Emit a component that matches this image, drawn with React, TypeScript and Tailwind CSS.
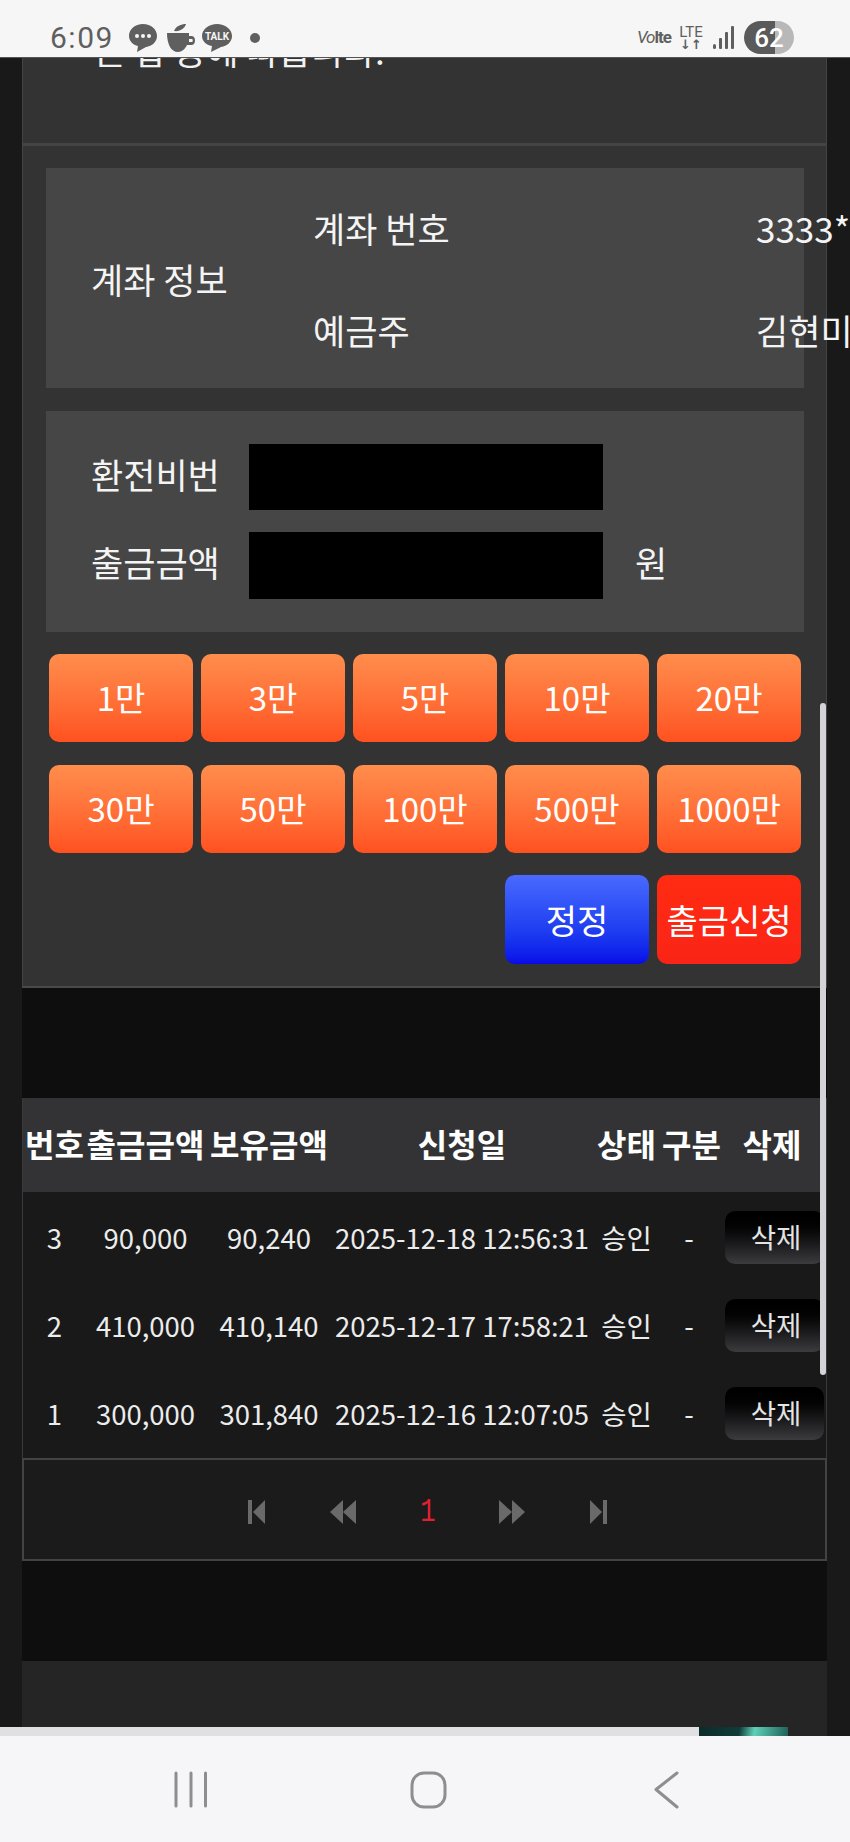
const amounts = ["1만", "3만", "5만", "10만", "20만", "30만", "50만", "100만", "500만", "1000만"];

const headers = ["번호", "출금금액", "보유금액", "신청일", "상태", "구분", "삭제"];

const rows = [
  { no: 3, amount: "90,000", balance: "90,240", date: "2025-12-18 12:56:31" },
  { no: 2, amount: "410,000", balance: "410,140", date: "2025-12-17 17:58:21" },
  { no: 1, amount: "300,000", balance: "301,840", date: "2025-12-16 12:07:05" },
];

const columns = "grid grid-cols-[63px_119px_128px_258px_71px_54px_112px]";

function StatusBar() {
  return (
    <div className="h-[58px] bg-[#f6f6f6] flex items-center pl-[50px] text-[#5f5f5f] font-['Roboto',sans-serif] pt-[18px] border-b border-[#555]">
      <span className="text-[30px] w-[79px] leading-none tracking-[1.5px]">6:09</span>
      <svg width="28" height="28" viewBox="0 0 28 28" className="mr-[10px]" fill="#5f5f5f">
        <path d="M14 0C22 0 28 5 28 12C28 18 23 22 17 23L8 28L9 22C4 21 0 17 0 12C0 5 6 0 14 0Z" />
        <circle cx="8" cy="12" r="2" fill="#f6f6f6" />
        <circle cx="14" cy="12" r="2" fill="#f6f6f6" />
        <circle cx="20" cy="12" r="2" fill="#f6f6f6" />
      </svg>
      <svg width="29" height="28" viewBox="0 0 29 28" className="mr-[6px]" fill="#5f5f5f">
        <path d="M7 7C9 2 14 0 19 0C18 4 13 8 7 7Z" />
        <path d="M0 9H22V12H25C29 12 29 21 25 21H20C18 25 15 28 11 28C4 28 0 20 0 9ZM22 15V18H25C26 18 26 15 25 15Z" fillRule="evenodd" />
      </svg>
      <svg width="30" height="28" viewBox="0 0 30 28" fill="#5f5f5f">
        <path d="M15 0C23 0 30 5 30 12C30 18 25 22 19 23L9 28L10 22C4 21 0 17 0 12C0 5 7 0 15 0Z" />
        <text x="15" y="16" textAnchor="middle" fontSize="10" fontWeight="700" fill="#f6f6f6" fontFamily="Roboto, sans-serif">TALK</text>
      </svg>
      <span className="ml-[18px] w-[10px] h-[10px] rounded-full bg-[#5f5f5f]" />
      <div className="ml-auto mr-[56px] flex items-center">
        <span className="text-[17px] leading-none w-[41px] tracking-[-1px] whitespace-nowrap">
          <span className="italic">Vo</span>
          <span className="font-bold">lte</span>
        </span>
        <div className="flex flex-col items-center w-[26px] mr-[9px]">
          <span className="text-[15px] leading-[14px]">LTE</span>
          <span className="text-[13px] leading-[12px] font-bold font-['DejaVu_Sans',sans-serif]">↓↑</span>
        </div>
        <svg width="22" height="23" viewBox="0 0 22 23" className="mr-[9px]" fill="#5f5f5f">
          <rect x="0" y="18" width="3" height="5" rx="1.5" />
          <rect x="6" y="12" width="3" height="11" rx="1" />
          <rect x="12" y="6" width="3" height="17" rx="1" />
          <rect x="18" y="0" width="3" height="23" rx="1" />
        </svg>
        <div className="w-[50px] h-[33px] rounded-full overflow-hidden bg-[linear-gradient(90deg,#5a5a5a_62%,#b8b8b8_62%)] flex items-center justify-center text-white text-[26px] font-medium leading-none">
          62
        </div>
      </div>
    </div>
  );
}

function PagerIcon({ dir, end }: { dir: "left" | "right"; end: boolean }) {
  // same shape for both directions, right just gets flipped
  return (
    <svg width={end ? 17 : 26} height="24" viewBox={end ? "0 0 17 24" : "0 0 26 24"} fill="#6a6a6a" className={dir === "right" ? "-scale-x-100" : ""}>
      {end ? (
        <>
          <rect x="0" y="0" width="4" height="24" />
          <path d="M17 0V24L5 12Z" />
        </>
      ) : (
        <>
          <path d="M13 0V24L0 12Z" />
          <path d="M26 0V24L13 12Z" />
        </>
      )}
    </svg>
  );
}

function App() {
  return (
    <div className="w-[850px] h-[1842px] overflow-hidden flex flex-col bg-[#191919] font-['Noto_Sans_CJK_KR','Noto_Sans',sans-serif] text-[#f2f2f2]">
      <StatusBar />
      <main className="relative flex-1 overflow-hidden flex flex-col">
        <div className="ml-[22px] w-[805px] flex-1 flex flex-col">
          {/* notice, scrolled mostly out of view */}
          <div className="h-[85px] bg-[#333333] border-x border-[#444] overflow-hidden shrink-0">
            <p className="-mt-[30px] pl-[71px] text-[35px] leading-[44px] whitespace-nowrap">는 합 등에 따릅니다.</p>
          </div>

          {/* withdraw form */}
          <section className="h-[845px] shrink-0 bg-[#333333] border-x border-[#444] border-t-[3px] border-t-[#444] border-b-2 border-b-[#4a4a4a] pt-[22px] text-[35px] text-[#f4f4f4]">
            <div className="mx-[23px] w-[758px] h-[220px] bg-[#464646] flex items-center pl-[45px]">
              <span className="w-[222px] shrink-0 leading-none">계좌 정보</span>
              <div className="flex flex-col gap-[60px] pt-[2px]">
                <div className="flex whitespace-nowrap leading-[42px]">
                  <span className="w-[443px] shrink-0">계좌 번호</span>
                  <span>3333***********</span>
                </div>
                <div className="flex whitespace-nowrap leading-[42px]">
                  <span className="w-[443px] shrink-0">예금주</span>
                  <span>김현미</span>
                </div>
              </div>
            </div>

            <div className="mx-[23px] mt-[23px] w-[758px] h-[221px] bg-[#464646] pl-[45px] pt-[33px] flex flex-col gap-[22px]">
              <div className="flex items-center h-[66px]">
                <span className="w-[158px] leading-none pb-[8px]">환전비번</span>
                <div className="w-[354px] h-[66px] bg-black" />
              </div>
              <div className="flex items-center h-[67px]">
                <span className="w-[158px] leading-none pb-[8px]">출금금액</span>
                <div className="w-[354px] h-[67px] bg-black" />
                <span className="ml-[32px] leading-none pb-[8px]">원</span>
              </div>
            </div>

            <div className="mx-[26px] mt-[22px] w-[752px] grid grid-cols-5 gap-x-[8px] gap-y-[23px] text-[33px] text-white">
              {amounts.map((a) => (
                <button key={a} className="h-[88px] rounded-[10px] bg-gradient-to-b from-[#ff8d4c] to-[#ff5120]">
                  {a}
                </button>
              ))}
            </div>
            <div className="mx-[26px] mt-[22px] w-[752px] flex justify-end gap-[8px] text-[34px] text-white">
              <button className="w-[144px] h-[89px] rounded-[10px] bg-gradient-to-b from-[#4a69ff] to-[#0a08e8]">정정</button>
              <button className="w-[144px] h-[89px] rounded-[10px] bg-gradient-to-b from-[#ff2c12] to-[#fa2416]">출금신청</button>
            </div>
          </section>

          {/* history */}
          <div className="h-[110px] shrink-0 bg-[#0e0e0f]" />
          <div className="shrink-0 border-x border-[#3a3a3a]">
            <div className={`${columns} h-[94px] bg-[#333335] items-center text-center text-[32px] font-bold text-white whitespace-nowrap`}>
              {headers.map((h) => (
                <span key={h} className="pb-[4px]">{h}</span>
              ))}
            </div>
            <div className="bg-[#19191a] pt-[2px] text-[27.500px] text-[#ececec]">
              {rows.map((r) => (
                <div key={r.no} className={`${columns} h-[88px] items-center text-center whitespace-nowrap`}>
                  <span>{r.no}</span>
                  <span>{r.amount}</span>
                  <span>{r.balance}</span>
                  <span>{r.date}</span>
                  <span>승인</span>
                  <span>-</span>
                  <span className="pl-[9px] pb-[2px] flex">
                    <button className="w-[99px] h-[53px] rounded-[10px] bg-gradient-to-b from-[#000000] to-[#3c3c3f] text-[#e4e4e4] pl-[3px]">삭제</button>
                  </span>
                </div>
              ))}
            </div>
          </div>

          {/* pager */}
          <div className="h-[103px] shrink-0 bg-[#1b1b1c] border-2 border-[#434343] pt-[4px] flex items-center">
            <div className="ml-[224px] flex items-center">
              <PagerIcon dir="left" end />
              <span className="ml-[65px]"><PagerIcon dir="left" end={false} /></span>
              <span className="ml-[65px] w-[14px] flex justify-center text-[#e3202f] text-[34px] leading-none scale-x-75 font-['Liberation_Mono',monospace]">1</span>
              <span className="ml-[64px]"><PagerIcon dir="right" end={false} /></span>
              <span className="ml-[65px]"><PagerIcon dir="right" end /></span>
            </div>
          </div>

          <div className="h-[100px] shrink-0 bg-[#0e0e0f]" />
          <div className="flex-1 bg-[#252526]" />
        </div>

        {/* scrollbar and the banner strip lie over the page */}
        <div className="absolute left-[820px] top-[645px] w-[6px] h-[672px] rounded-full bg-[#d4d4d8]" />
        <div className="absolute left-0 bottom-0 flex h-[9px]">
          <div className="w-[699px] bg-[#e0e0e2]" />
          <div className="w-[89px] bg-[linear-gradient(100deg,#0c2a2a_0%,#103c38_45%,#5fd0b8_62%,#1f5f58_100%)]" />
        </div>
      </main>

      {/* android nav */}
      <nav className="h-[106px] bg-[#f6f6f8] relative shrink-0">
        <svg width="850" height="106" viewBox="0 0 850 106" fill="none" stroke="#8e8e8e" strokeWidth="3">
          <path d="M176 37V70M191 37V70M205.500 37V70" strokeLinecap="round" />
          <rect x="412" y="37" width="33" height="34" rx="12" />
          <path d="M677 37L656 53.500L677 71" strokeLinecap="round" strokeLinejoin="round" />
        </svg>
      </nav>
    </div>
  );
}

export default App;
